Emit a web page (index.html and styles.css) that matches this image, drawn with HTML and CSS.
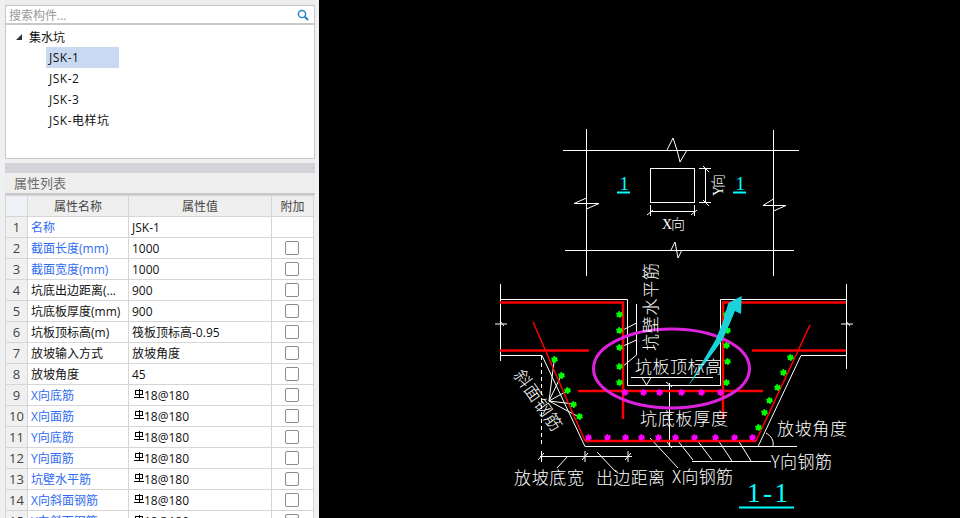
FILE: index.html
```html
<!DOCTYPE html>
<html lang="zh-CN">
<head>
    <meta charset="UTF-8">
    <title>集水坑</title>
    <link rel="stylesheet" href="styles.css">
</head>
<body>
    <svg class="defs" width="0" height="0">
        <symbol id="rebar" viewBox="0 0 10 10">
            <path d="M1.5 1.5h7v3.5h-7z M5 0v7.5 M0 8h10" fill="none" stroke="#000" stroke-width="1" shape-rendering="crispEdges"/>
        </symbol>
    </svg>

    <div class="side">
        <div class="strip"></div>
        <div class="search">
            <span class="search-hint">搜索构件...</span>
            <svg class="search-icon" width="12" height="12" viewBox="0 0 12 12">
                <circle cx="5" cy="5" r="3.6" fill="none" stroke="#2a86bd" stroke-width="1.5"/>
                <path d="M7.8 7.8L11 11" stroke="#2a86bd" stroke-width="2"/>
            </svg>
        </div>
        <div class="tree">
            <div class="tree-root"><span class="tree-arrow"></span>集水坑</div>
            <div class="tree-item selected">JSK-1</div>
            <div class="tree-item">JSK-2</div>
            <div class="tree-item">JSK-3</div>
            <div class="tree-item">JSK-电样坑</div>
        </div>
        <div class="gap"></div>
        <div class="props">
            <div class="props-bar"></div>
            <div class="props-title">属性列表</div>
            <table class="props-table">
                <colgroup><col class="c-no"><col class="c-name"><col class="c-val"><col class="c-add"></colgroup>
                <thead>
                    <tr><th class="corner"></th><th>属性名称</th><th>属性值</th><th>附加</th></tr>
                </thead>
                <tbody>
                    <tr><td class="no">1</td><td class="blue">名称</td><td>JSK-1</td><td></td></tr>
                    <tr><td class="no">2</td><td class="blue">截面长度(mm)</td><td>1000</td><td><span class="check"></span></td></tr>
                    <tr><td class="no">3</td><td class="blue">截面宽度(mm)</td><td>1000</td><td><span class="check"></span></td></tr>
                    <tr><td class="no">4</td><td>坑底出边距离(...</td><td>900</td><td><span class="check"></span></td></tr>
                    <tr><td class="no">5</td><td>坑底板厚度(mm)</td><td>900</td><td><span class="check"></span></td></tr>
                    <tr><td class="no">6</td><td>坑板顶标高(m)</td><td>筏板顶标高-0.95</td><td><span class="check"></span></td></tr>
                    <tr><td class="no">7</td><td>放坡输入方式</td><td>放坡角度</td><td><span class="check"></span></td></tr>
                    <tr><td class="no">8</td><td>放坡角度</td><td>45</td><td><span class="check"></span></td></tr>
                    <tr><td class="no">9</td><td class="blue">X向底筋</td><td><svg class="bar"><use href="#rebar"/></svg>18@180</td><td><span class="check"></span></td></tr>
                    <tr><td class="no">10</td><td class="blue">X向面筋</td><td><svg class="bar"><use href="#rebar"/></svg>18@180</td><td><span class="check"></span></td></tr>
                    <tr><td class="no">11</td><td class="blue">Y向底筋</td><td><svg class="bar"><use href="#rebar"/></svg>18@180</td><td><span class="check"></span></td></tr>
                    <tr><td class="no">12</td><td class="blue">Y向面筋</td><td><svg class="bar"><use href="#rebar"/></svg>18@180</td><td><span class="check"></span></td></tr>
                    <tr><td class="no">13</td><td class="blue">坑壁水平筋</td><td><svg class="bar"><use href="#rebar"/></svg>18@180</td><td><span class="check"></span></td></tr>
                    <tr><td class="no">14</td><td class="blue">X向斜面钢筋</td><td><svg class="bar"><use href="#rebar"/></svg>18@180</td><td><span class="check"></span></td></tr>
                    <tr><td class="no">15</td><td class="blue">Y向斜面钢筋</td><td><svg class="bar"><use href="#rebar"/></svg>18@180</td><td><span class="check"></span></td></tr>
                </tbody>
            </table>
        </div>
    </div>

    <!-- viewBox starts at 319 so the drawing uses window coordinates -->
    <svg class="cad" viewBox="319 0 641 518" width="641" height="518">
        <!-- plan view -->
        <g class="line">
            <path d="M563 150.5H799 M565 250.5H794 M586.5 129V276 M773.5 130V276"/>
            <path d="M667 150L673 138L677 150L680 162L687 150"/>
            <path d="M671 250L675 242L678 258L682 250"/>
            <path d="M574 203.5H599 M574 203.5L586.5 198 M586.5 209L599 203.5"/>
            <path d="M763 205.5H786 M763 205.5L773.5 199 M773.5 211L786 205.5"/>
            <rect x="650.5" y="168.5" width="44" height="34"/>
            <path d="M650.5 205V216 M694.5 205V216 M650 211.5H695 M647 215L653 210 M691 215L697 210"/>
            <path d="M699 168.5H711 M699 202.5H711 M705.5 168V203 M703 166L709 172 M703 200L709 206"/>
        </g>
        <text class="t small" x="662" y="229" textLength="23">X向</text>
        <text class="t small" transform="translate(723 196) rotate(-90)" textLength="22">Y向</text>
        <text class="t cyan num" x="619.5" y="190">1</text>
        <text class="t cyan num" x="735.5" y="190">1</text>
        <path class="cyan-line" d="M617 192.5H630 M733 192.5H746"/>

        <!-- section: concrete outline and dimension lines -->
        <g class="line">
            <path d="M500.5 284V361 M846.5 284V369"/>
            <path d="M495 324H507 M500 321L504 326 M841 324H853 M846 321L850 326"/>
            <path d="M500 299.5H627.5V385.5H720.5V299.5H846"/>
            <path d="M500 355.5H542L585 446.5H797 M758 446.5L801 355.5H846"/>
            <path class="dash" d="M541.5 356V446"/>
            <path d="M636.5 304V355L622 367 M636.5 340L621 347 M636.5 323L621 331"/>
            <path d="M631 377.5H713 M642 377.5L646.5 385L651 377.5 M669.5 383V447 M666 382L672 387"/>
            <path d="M540 456.5H632 M541.5 451V462 M585 451V462 M628 451V462 M538 460L544 453 M582 460L588 453 M625 460L631 453"/>
            <path d="M557 468L568 456 M597 452L616 472"/>
            <path d="M692 461.5H771 M678 441L693 460 M697 440L712 460 M718 440L732 461 M738 440L751 461"/>
            <path d="M650 438L678 468 M667 442L672 448"/>
            <path d="M766 433C771 436 774 440 773 446" fill="none"/>
            <path d="M549 401L554 362 M549 401L561 376 M549 401L567 391 M549 401L574 404 M549 401L579 417"/>
        </g>

        <!-- rebar -->
        <g class="red">
            <path class="thick" d="M500 302.5H623V419 M846 302.5H723V419 M500 350.5H589 M752 350.5H846 M578 391H763"/>
            <path class="thick" d="M585 441H756"/>
            <path d="M533 322L585 441 M756 441L810 325"/>
        </g>

        <ellipse class="ring" cx="671.5" cy="368.5" rx="78" ry="39.5"/>

        <g class="dots green">
            <circle cx="619.5" cy="314.5"/><circle cx="619.5" cy="330.5"/><circle cx="619.5" cy="347.5"/><circle cx="619.5" cy="366.5"/><circle cx="619.5" cy="382.5"/>
            <circle cx="726.5" cy="314.5"/><circle cx="727.5" cy="330.5"/><circle cx="726.5" cy="345.5"/><circle cx="727.5" cy="361.5"/><circle cx="726.5" cy="382.5"/>
            <circle cx="554.5" cy="359.5"/><circle cx="561.5" cy="375.5"/><circle cx="567.5" cy="390.5"/><circle cx="573.5" cy="404.5"/><circle cx="579.5" cy="416.5"/>
            <circle cx="790.5" cy="357.5"/><circle cx="783.5" cy="372.5"/><circle cx="777.5" cy="387.5"/><circle cx="769.5" cy="400.5"/><circle cx="764.5" cy="412.5"/><circle cx="758.5" cy="427.5"/>
        </g>
        <g class="dots pink">
            <circle cx="625" cy="392.5"/><circle cx="643.5" cy="392.5"/><circle cx="659.5" cy="392.5"/><circle cx="681.5" cy="392.5"/><circle cx="701.5" cy="392.5"/><circle cx="720.5" cy="392.5"/>
            <circle cx="588.5" cy="437.5"/><circle cx="607.5" cy="437.5"/><circle cx="625.5" cy="437.5"/><circle cx="641.5" cy="437.5"/><circle cx="658.5" cy="437.5"/><circle cx="675.5" cy="437.5"/><circle cx="694.5" cy="437.5"/><circle cx="715.5" cy="437.5"/><circle cx="734.5" cy="437.5"/><circle cx="752.5" cy="437.5"/>
        </g>

        <polygon class="arrow" points="687.5,387 715.5,340 722.5,323 728.3,303 741.7,296 741,314 735,311 730,323 722.5,340"/>

        <!-- labels -->
        <text class="t" transform="translate(657 351) rotate(-90)" textLength="88">坑壁水平筋</text>
        <text class="t" x="635" y="373" textLength="87">坑板顶标高</text>
        <text class="t" x="640" y="425" textLength="88">坑底板厚度</text>
        <text class="t" x="777" y="435" textLength="70">放坡角度</text>
        <text class="t" x="771" y="468" textLength="61">Y向钢筋</text>
        <text class="t" x="672" y="483" textLength="61">X向钢筋</text>
        <text class="t" x="514" y="484" textLength="70">放坡底宽</text>
        <text class="t" x="596" y="484" textLength="69">出边距离</text>
        <text class="t" transform="translate(513 375) rotate(55)" textLength="70">斜面钢筋</text>
        <text class="t cyan title" x="747" y="502" textLength="41">1-1</text>
        <path class="cyan-line" d="M739 507.5H794"/>
    </svg>
</body>
</html>
```

FILE: styles.css
```css
* { box-sizing: border-box; }
html, body { margin: 0; padding: 0; }
body { display: flex; width: 960px; height: 518px; overflow: hidden; background: #000; font-family: "Open Sans", "Noto Sans CJK SC", sans-serif; font-size: 12px; color: #111; }
.defs { position: absolute; }

/* left panel */
.side { flex: none; width: 319px; height: 518px; padding: 0 4px 0 5px; background: #f0f0f0; overflow: hidden; }
.strip { height: 5px; background: #ececec; }
.search { display: flex; align-items: center; justify-content: space-between; height: 20px; padding: 0 5px 0 3px; background: #fff; border: 1px solid #c8c8c8; border-bottom-width: 2px; }
.search-hint { color: #999; }
.search-icon { display: block; }
.tree { height: 134px; padding-top: 1px; background: #fff; border: 1px solid #c8c8c8; border-top: 0; }
.tree-root { display: flex; align-items: center; height: 21px; padding-left: 10px; }
.tree-arrow { width: 0; height: 0; margin-right: 7px; border-style: solid; border-width: 0 0 6px 6px; border-color: transparent transparent #333 transparent; }
.tree-item { width: 73px; height: 21px; margin-left: 40px; padding-left: 3px; line-height: 21px; letter-spacing: .5px; }
.tree-item.selected { background: #c8d9f1; }
.gap { height: 4px; }

.props-bar { height: 10px; background: #d3d4d9; }
.props-title { height: 22px; padding-left: 9px; line-height: 21px; font-size: 13px; color: #6b6b6b; background: #eee; border-bottom: 2px solid #c8c8c8; }
.props-table { width: 308px; margin-left: 0; border-collapse: collapse; table-layout: fixed; background: #fff; }
.c-no { width: 22px; }
.c-name { width: 101px; }
.c-val { width: 143px; }
.c-add { width: 42px; }
.props-table th, .props-table td { height: 21px; padding: 0 0 0 3px; border: 1px solid #d6d6d6; font-weight: normal; white-space: nowrap; overflow: hidden; }
.props-table th { padding: 0; text-align: center; background: #efefef; color: #444; }
.props-table th.corner { background: #eef1f6; }
.props-table td.no { padding: 0; text-align: center; background: #f0f0f0; color: #444; font-size: 13px; }
.props-table td.blue { color: #2f6cf0; }
.props-table td:last-child { padding: 0; }
.check { display: block; width: 14px; height: 14px; margin: 0 0 0 13px; background: #fff; border: 1px solid #8c8c8c; border-radius: 2px; }
.bar { width: 10px; height: 10px; margin: 0 0 4px 2px; vertical-align: middle; }

/* drawing */
.cad { flex: none; display: block; background: #000; }
.line path, .line rect { fill: none; stroke: #fff; stroke-width: 1; }
.line .dash { stroke-dasharray: 4 3; }
.red path { fill: none; stroke: #f00; stroke-width: 1.5; }
.red .thick { stroke-width: 2.5; }
.ring { fill: none; stroke: #dd22dd; stroke-width: 3; }
.dots circle { r: 2.6px; stroke-width: 1.6; stroke-dasharray: 1.6 1.1; }
.green circle { fill: #00ff00; stroke: #00ff00; }
.pink circle { fill: #ff00ff; stroke: #ff00ff; }
.arrow { fill: #19d3da; }
.cyan-line { fill: none; stroke: #00ffff; stroke-width: 2; }
.t { fill: #fff; font-family: "Noto Sans CJK SC", sans-serif; font-size: 17px; font-weight: 300; }
.t.small { font-size: 14px; font-family: "Liberation Serif", "Noto Sans CJK SC", serif; }
.t.cyan { fill: #00ffff; font-family: "Liberation Serif", serif; }
.t.num { font-size: 19px; }
.t.title { font-size: 27px; }
```
